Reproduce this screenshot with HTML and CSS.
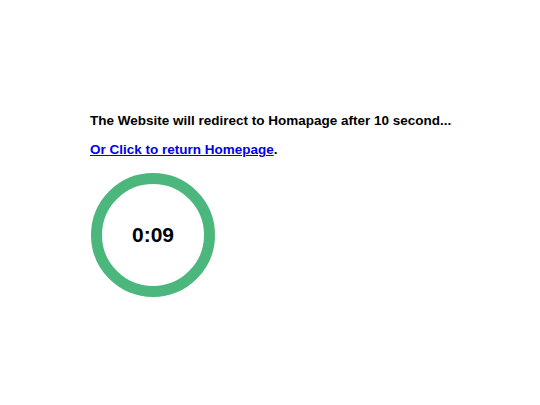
FILE: index.html
```html
<!DOCTYPE html>
<html>
<head>
<meta charset="utf-8">
<link rel="stylesheet" href="styles.css">
</head>
<body>
<main class="page">
  <p class="msg">The Website will redirect to Homapage after 10 second...</p>
  <p class="msg msg-link"><a href="#" class="home-link">Or Click to return Homepage</a>.</p>
  <div class="timer">
    <svg class="ring" width="124" height="124" viewBox="0 0 124 124">
      <circle cx="62" cy="62" r="56.5" fill="none" stroke="#4cb77c" stroke-width="11"/>
    </svg>
    <span class="time">0:09</span>
  </div>
</main>
</body>
</html>
```
FILE: styles.css
```css
html, body {
  margin: 0;
  padding: 0;
  background: #fff;
}
.page {
  padding: 113px 0 0 90px;
  font-family: "Liberation Sans", Arial, sans-serif;
  font-weight: bold;
  font-size: 13.5px;
  color: #000;
}
.msg {
  margin: 0 0 13px 0;
  line-height: 16px;
}
.msg-link {
  margin-bottom: 15px;
}
.home-link {
  color: #0000ee;
  text-decoration: underline;
}
.timer {
  position: relative;
  width: 124px;
  height: 124px;
  margin-left: 1px;
}
.ring {
  display: block;
}
.time {
  position: absolute;
  inset: 0;
  display: flex;
  align-items: center;
  justify-content: center;
  font-size: 21px;
}
```
